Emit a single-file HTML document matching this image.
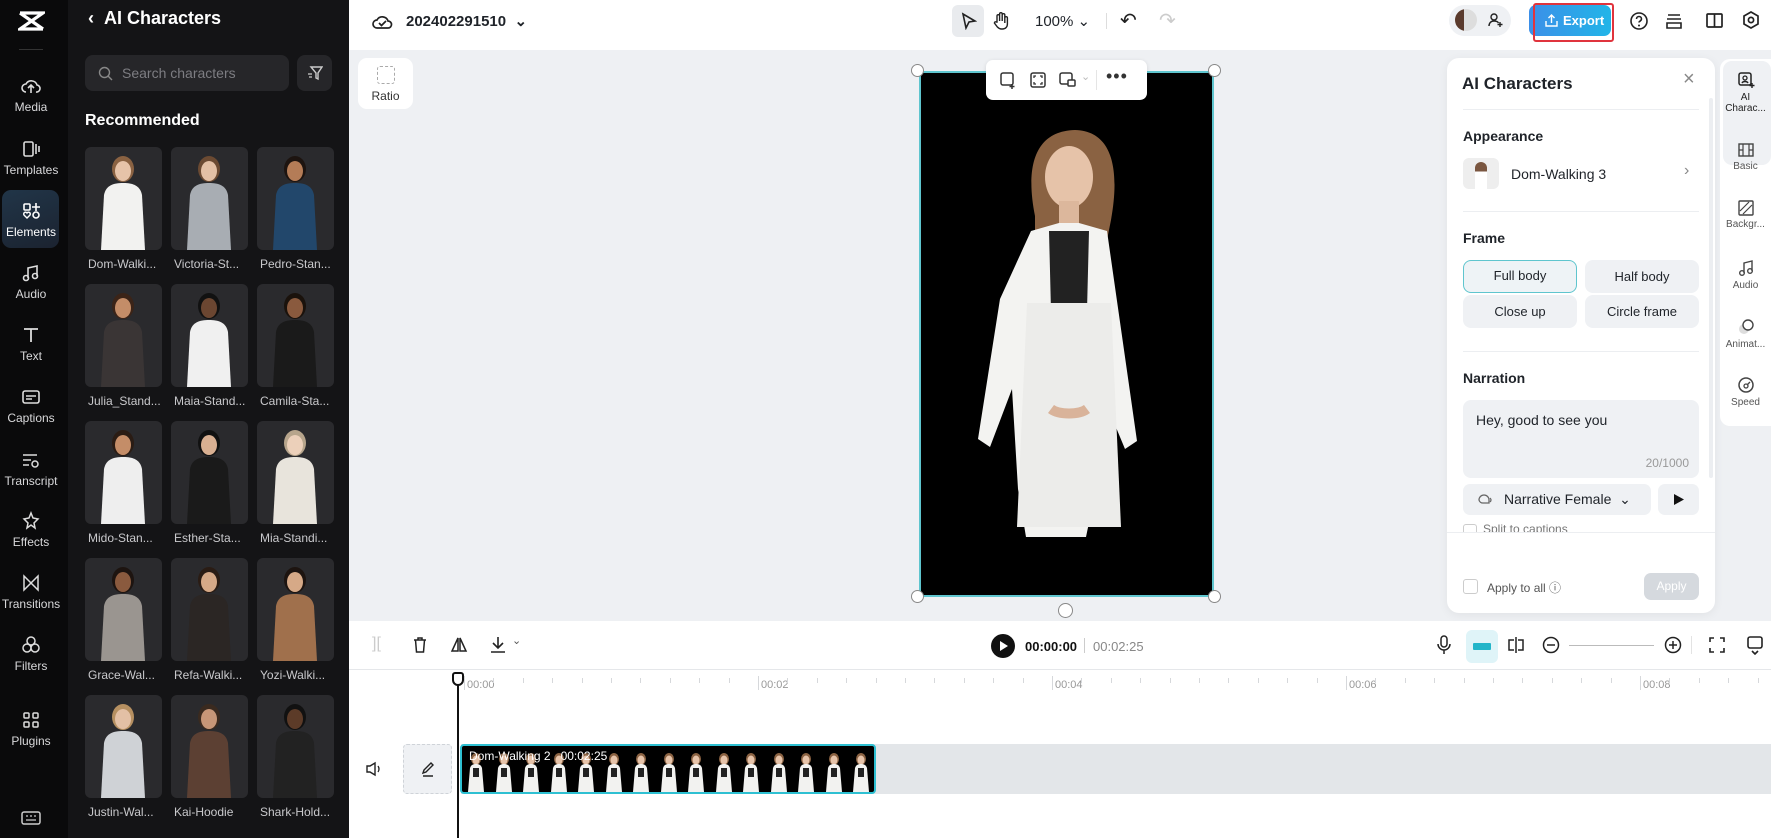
<!DOCTYPE html>
<html><head><meta charset="utf-8">
<style>
*{box-sizing:border-box;margin:0;padding:0}
body{width:1771px;height:838px;overflow:hidden;font-family:"Liberation Sans",sans-serif;background:#eef0f3;position:relative}
.abs{position:absolute}
#rail{left:0;top:0;width:68px;height:838px;background:#0a0a0b}
.ri{position:absolute;left:0;width:62px;text-align:center;color:#d8d8da;font-size:12px}
.ri svg{display:block;margin:0 auto 4px}
#panel{left:68px;top:0;width:281px;height:838px;background:#141416;color:#fff}
.card{position:absolute;width:77px;height:103px;border-radius:6px;background:#2a2a2d;overflow:hidden}
.cl{position:absolute;width:80px;font-size:12px;color:#c9c9cc;white-space:nowrap;overflow:hidden}
#top{left:349px;top:0;width:1422px;height:50px;background:#fff}
#tl{left:349px;top:621px;width:1422px;height:217px;background:#fff}
.btn{background:#eff1f4;border-radius:8px;text-align:center;font-size:13px;color:#1f2329;position:absolute;height:33px;line-height:33px;width:114px}
.rt{position:absolute;left:0;width:51px;text-align:center;font-size:10px;color:#555}
.rt svg{display:block;margin:0 auto 3px}
</style></head><body>

<div id="rail" class="abs">
 <svg class="abs" style="left:18px;top:10px" width="27" height="22" viewBox="0 0 27 22"><path d="M2 3h23L2 19h23M2 3l23 16" stroke="#fff" stroke-width="3.2" fill="none"/></svg>
 <div class="abs" style="left:19px;top:49px;width:24px;height:1px;background:#333"></div>
 <div class="abs" style="left:2px;top:190px;width:57px;height:58px;border-radius:9px;background:linear-gradient(160deg,#213548,#1b2330)"></div>
 <div class="ri" style="top:76px"><svg width="22" height="20" viewBox="0 0 22 20"><path d="M6 16a4 4 0 010-8 6 6 0 0111 1 3.5 3.5 0 01-1 7M11 17V10M8 12l3-3 3 3" stroke="#ddd" stroke-width="1.6" fill="none"/></svg>Media</div>
 <div class="ri" style="top:139px"><svg width="22" height="20" viewBox="0 0 22 20"><rect x="4" y="3" width="9" height="14" rx="1.5" stroke="#ddd" stroke-width="1.6" fill="none"/><path d="M16 5v10M19 7v6" stroke="#ddd" stroke-width="1.6"/></svg>Templates</div>
 <div class="ri" style="top:201px;color:#fff"><svg width="22" height="20" viewBox="0 0 22 20"><rect x="4" y="3" width="6" height="6" rx="1" stroke="#fff" stroke-width="1.6" fill="none"/><path d="M16 2v8M12 6h8" stroke="#fff" stroke-width="1.6"/><circle cx="16" cy="14" r="3" stroke="#fff" stroke-width="1.6" fill="none"/><path d="M7 17l-3-3a1.8 1.8 0 013-2 1.8 1.8 0 013 2z" stroke="#fff" stroke-width="1.4" fill="none"/></svg>Elements</div>
 <div class="ri" style="top:263px"><svg width="22" height="20" viewBox="0 0 22 20"><path d="M8 15V5l9-2v10" stroke="#ddd" stroke-width="1.6" fill="none"/><circle cx="6" cy="15" r="2.5" stroke="#ddd" stroke-width="1.6" fill="none"/><circle cx="15" cy="13" r="2.5" stroke="#ddd" stroke-width="1.6" fill="none"/></svg>Audio</div>
 <div class="ri" style="top:325px"><svg width="22" height="20" viewBox="0 0 22 20"><path d="M4 4h14M11 4v13" stroke="#ddd" stroke-width="1.8"/></svg>Text</div>
 <div class="ri" style="top:387px"><svg width="22" height="20" viewBox="0 0 22 20"><rect x="3" y="4" width="16" height="12" rx="2" stroke="#ddd" stroke-width="1.6" fill="none"/><path d="M6 9h10M6 12h6" stroke="#ddd" stroke-width="1.5"/></svg>Captions</div>
 <div class="ri" style="top:450px"><svg width="22" height="20" viewBox="0 0 22 20"><path d="M3 5h14M3 10h8M3 15h6" stroke="#ddd" stroke-width="1.6"/><circle cx="15" cy="14" r="3" stroke="#ddd" stroke-width="1.5" fill="none"/></svg>Transcript</div>
 <div class="ri" style="top:511px"><svg width="22" height="20" viewBox="0 0 22 20"><path d="M11 2l2 5 5 1-4 4 1 5-4-3-4 3 1-5-4-4 5-1z" stroke="#ddd" stroke-width="1.5" fill="none"/></svg>Effects</div>
 <div class="ri" style="top:573px"><svg width="22" height="20" viewBox="0 0 22 20"><path d="M4 3v14l7-7zM18 3v14l-7-7z" stroke="#ddd" stroke-width="1.5" fill="none"/></svg>Transitions</div>
 <div class="ri" style="top:635px"><svg width="22" height="20" viewBox="0 0 22 20"><circle cx="11" cy="6" r="4" stroke="#ddd" stroke-width="1.5" fill="none"/><circle cx="7" cy="13" r="4" stroke="#ddd" stroke-width="1.5" fill="none"/><circle cx="15" cy="13" r="4" stroke="#ddd" stroke-width="1.5" fill="none"/></svg>Filters</div>
 <div class="ri" style="top:710px"><svg width="22" height="20" viewBox="0 0 22 20"><rect x="4" y="3" width="5" height="5" rx="1" stroke="#ddd" stroke-width="1.5" fill="none"/><rect x="13" y="3" width="5" height="5" rx="1" stroke="#ddd" stroke-width="1.5" fill="none"/><rect x="4" y="12" width="5" height="5" rx="1" stroke="#ddd" stroke-width="1.5" fill="none"/><rect x="13" y="12" width="5" height="5" rx="1" stroke="#ddd" stroke-width="1.5" fill="none"/></svg>Plugins</div>
 <svg class="abs" style="left:21px;top:810px" width="20" height="16" viewBox="0 0 20 16"><rect x="1" y="2" width="18" height="12" rx="2" stroke="#ccc" stroke-width="1.5" fill="none"/><path d="M5 10h10M5 6h2M9 6h2M13 6h2" stroke="#ccc" stroke-width="1.3"/></svg>
</div>

<div id="panel" class="abs">
 <div class="abs" style="left:20px;top:8px;font-size:18px;font-weight:bold">‹&nbsp;&nbsp;AI Characters</div>
 <div class="abs" style="left:17px;top:55px;width:204px;height:36px;border-radius:8px;background:#262629;color:#7d7d82;font-size:14px;line-height:36px;padding-left:37px">Search characters
  <svg class="abs" style="left:13px;top:11px" width="15" height="15" viewBox="0 0 15 15"><circle cx="6.5" cy="6.5" r="5" stroke="#888" stroke-width="1.4" fill="none"/><path d="M10 10l4 4" stroke="#888" stroke-width="1.4"/></svg></div>
 <div class="abs" style="left:229px;top:55px;width:35px;height:36px;border-radius:8px;background:#262629"><svg style="margin:10px" width="16" height="16" viewBox="0 0 16 16"><path d="M4 2h11l-4 6v6l-2-1V8z" stroke="#ccc" stroke-width="1.4" fill="none"/><path d="M1 9h4M2 12h3" stroke="#ccc" stroke-width="1.2"/></svg></div>
 <div class="abs" style="left:17px;top:112px;font-size:16px;font-weight:bold">Recommended</div>
 <div id="grid"></div>
</div>

<div id="top" class="abs">
 <svg class="abs" style="left:22px;top:13px" width="22" height="18" viewBox="0 0 22 18"><path d="M6 15a4 4 0 010-8 6 6 0 0111 1 3.5 3.5 0 010 7z" stroke="#222" stroke-width="1.7" fill="none"/><path d="M8 10l2.5 2.5L15 8" stroke="#222" stroke-width="1.7" fill="none"/></svg>
 <div class="abs" style="left:57px;top:12px;font-size:15px;font-weight:bold;color:#1f2329">202402291510&nbsp;&nbsp;⌄</div>
 <div class="abs" style="left:603px;top:5px;width:32px;height:32px;border-radius:6px;background:#e9ebee"></div>
 <svg class="abs" style="left:611px;top:12px" width="17" height="18" viewBox="0 0 17 18"><path d="M3 2l12 7-6 1-3 6z" stroke="#222" stroke-width="1.6" fill="none"/></svg>
 <svg class="abs" style="left:642px;top:11px" width="20" height="20" viewBox="0 0 20 20"><path d="M6 11V5a1.3 1.3 0 012.6 0v5V3a1.3 1.3 0 012.6 0v7V4a1.3 1.3 0 012.6 0v8V7a1.3 1.3 0 012.6 0v6c0 3-2 5-5 5h-1c-2 0-3-1-4-2l-3-4a1.3 1.3 0 012-1z" stroke="#222" stroke-width="1.4" fill="none"/></svg>
 <div class="abs" style="left:686px;top:12px;font-size:15px;color:#1f2329">100% ⌄</div>
 <div class="abs" style="left:757px;top:13px;width:1px;height:16px;background:#ddd"></div>
 <div class="abs" style="left:771px;top:8px;font-size:20px;color:#222">↶</div>
 <div class="abs" style="left:810px;top:8px;font-size:20px;color:#ccc">↷</div>
 <div class="abs" style="left:1100px;top:5px;width:62px;height:31px;border-radius:16px;background:#eff1f4"></div>
 <div class="abs" style="left:1106px;top:9px;width:22px;height:22px;border-radius:50%;background:linear-gradient(90deg,#5a3a2c 40%,#ddd 40%)"></div>
 <svg class="abs" style="left:1139px;top:12px" width="16" height="16" viewBox="0 0 16 16"><circle cx="6" cy="5" r="3" stroke="#222" stroke-width="1.4" fill="none"/><path d="M1 14c0-3 2-5 5-5s4 1 4.5 2M12 10v5M9.5 12.5h5" stroke="#222" stroke-width="1.4" fill="none"/></svg>
 <div class="abs" style="left:1180px;top:5px;width:82px;height:31px;border-radius:7px;background:linear-gradient(90deg,#3c8fe8,#21b5e8);color:#fff;font-size:13px;font-weight:bold;line-height:31px;padding-left:34px">Export
  <svg class="abs" style="left:16px;top:9px" width="13" height="13" viewBox="0 0 13 13"><path d="M6.5 9V1M3.5 4l3-3 3 3M1 7v5h11V7" stroke="#fff" stroke-width="1.4" fill="none"/></svg></div>
 <div class="abs" style="left:1184px;top:3px;width:81px;height:39px;border:2px solid #e0343d;border-radius:3px"></div>
 <svg class="abs" style="left:1280px;top:11px" width="20" height="20" viewBox="0 0 20 20"><circle cx="10" cy="10" r="8" stroke="#222" stroke-width="1.6" fill="none"/><path d="M7.5 8a2.5 2.5 0 115 0c0 2-2.5 2-2.5 3.5" stroke="#222" stroke-width="1.6" fill="none"/><circle cx="10" cy="14.5" r="1" fill="#222"/></svg>
 <svg class="abs" style="left:1316px;top:12px" width="18" height="18" viewBox="0 0 18 18"><path d="M3 3h12M2 7h14M2 11h14v5H2z" stroke="#222" stroke-width="1.6" fill="none"/></svg>
 <svg class="abs" style="left:1356px;top:11px" width="19" height="19" viewBox="0 0 19 19"><rect x="2" y="3" width="15" height="13" rx="1" stroke="#222" stroke-width="1.7" fill="none"/><path d="M9.5 3v13" stroke="#222" stroke-width="1.7"/></svg>
 <svg class="abs" style="left:1392px;top:10px" width="20" height="20" viewBox="0 0 20 20"><path d="M10 2l7 4v8l-7 4-7-4V6z" stroke="#222" stroke-width="1.7" fill="none"/><circle cx="10" cy="10" r="2.6" stroke="#222" stroke-width="1.7" fill="none"/></svg>
</div>

<!-- ratio -->
<div class="abs" style="left:358px;top:58px;width:55px;height:51px;background:#fff;border-radius:9px;text-align:center;font-size:12px;color:#333;padding-top:8px">
 <div style="width:18px;height:18px;border:1.5px dashed #aaa;border-radius:3px;margin:0 auto 5px"></div>Ratio</div>

<!-- canvas -->
<div class="abs" style="left:919px;top:71px;width:295px;height:526px;background:#000;border:2px solid #5fc5ce"></div>
<svg class="abs" style="left:919px;top:71px" width="295" height="526" viewBox="0 0 295 526">
 <path d="M116 145c-10-50 0-85 40-86 38 1 45 40 36 90l-8 40-68-4z" fill="#8a6242"/>
 <ellipse cx="150" cy="106" rx="24" ry="31" fill="#e6c3a9"/>
 <rect x="140" y="130" width="20" height="22" fill="#dcb79c"/>
 <path d="M112 160l28-8h20l28 8 10 70 20 140-12 8-25-60-4 100-10 48h-60l-8-48-6-100-22 58-12-8 22-140z" fill="#f3f3f1"/>
 <path d="M130 160h40l-2 80h-36z" fill="#222"/>
 <path d="M108 232h84l10 224H98z" fill="#ececea"/>
 <path d="M132 338c8 6 28 6 36 0" stroke="#d9b39a" stroke-width="10" fill="none"/>
</svg>
<div class="abs" style="left:911px;top:64px;width:13px;height:13px;border-radius:50%;background:#fff;border:1px solid #888"></div>
<div class="abs" style="left:1208px;top:64px;width:13px;height:13px;border-radius:50%;background:#fff;border:1px solid #888"></div>
<div class="abs" style="left:911px;top:590px;width:13px;height:13px;border-radius:50%;background:#fff;border:1px solid #888"></div>
<div class="abs" style="left:1208px;top:590px;width:13px;height:13px;border-radius:50%;background:#fff;border:1px solid #888"></div>
<div class="abs" style="left:1058px;top:603px;width:15px;height:15px;border-radius:50%;background:#fff;border:1px solid #888"></div>
<div class="abs" style="left:986px;top:60px;width:161px;height:40px;background:#fff;border-radius:7px;box-shadow:0 1px 4px rgba(0,0,0,.12)">
 <svg class="abs" style="left:13px;top:11px" width="18" height="18" viewBox="0 0 18 18"><rect x="2" y="2" width="12" height="12" rx="2" stroke="#333" stroke-width="1.5" fill="none"/><path d="M13 13v5M10.5 15.5h5" stroke="#333" stroke-width="1.5"/></svg>
 <svg class="abs" style="left:43px;top:11px" width="18" height="18" viewBox="0 0 18 18"><rect x="2" y="2" width="14" height="14" rx="2" stroke="#333" stroke-width="1.5" fill="none"/><path d="M5 7V5h2M11 5h2v2M13 11v2h-2M7 13H5v-2" stroke="#333" stroke-width="1.3" fill="none"/></svg>
 <svg class="abs" style="left:73px;top:11px" width="18" height="18" viewBox="0 0 18 18"><rect x="1" y="2" width="12" height="11" rx="2" stroke="#333" stroke-width="1.5" fill="none"/><rect x="9" y="9" width="7" height="6" rx="1" stroke="#333" stroke-width="1.5" fill="#fff"/></svg>
 <div class="abs" style="left:95px;top:10px;color:#bbb;font-size:11px">⌄</div>
 <div class="abs" style="left:110px;top:10px;width:1px;height:20px;background:#e5e5e5"></div>
 <div class="abs" style="left:120px;top:6px;font-size:18px;color:#333;letter-spacing:1px">•••</div>
</div>

<!-- right panel -->
<div class="abs" style="left:1447px;top:58px;width:268px;height:555px;background:#fff;border-radius:12px;box-shadow:0 2px 10px rgba(0,0,0,.06);color:#1f2329">
 <div class="abs" style="left:15px;top:16px;font-size:17px;font-weight:bold">AI Characters</div>
 <div class="abs" style="left:236px;top:10px;font-size:20px;color:#888">×</div>
 <div class="abs" style="left:16px;top:51px;width:236px;height:1px;background:#eceef1"></div>
 <div class="abs" style="left:16px;top:70px;font-size:14px;font-weight:bold">Appearance</div>
 <div class="abs" style="left:16px;top:100px;width:36px;height:31px;border-radius:6px;background:#eee;overflow:hidden"><div style="margin:4px auto 0;width:12px;height:27px;background:linear-gradient(#7a5640 35%,#fff 35%);border-radius:6px 6px 0 0"></div></div>
 <div class="abs" style="left:64px;top:108px;font-size:14px">Dom-Walking 3</div>
 <div class="abs" style="left:237px;top:104px;font-size:16px;color:#888">›</div>
 <div class="abs" style="left:16px;top:153px;width:236px;height:1px;background:#eceef1"></div>
 <div class="abs" style="left:16px;top:172px;font-size:14px;font-weight:bold">Frame</div>
 <div class="btn" style="left:16px;top:202px;background:#eef3f6;border:1.5px solid #5fc5ce;line-height:30px">Full body</div>
 <div class="btn" style="left:138px;top:202px">Half body</div>
 <div class="btn" style="left:16px;top:237px">Close up</div>
 <div class="btn" style="left:138px;top:237px">Circle frame</div>
 <div class="abs" style="left:16px;top:293px;width:236px;height:1px;background:#eceef1"></div>
 <div class="abs" style="left:16px;top:312px;font-size:14px;font-weight:bold">Narration</div>
 <div class="abs" style="left:16px;top:342px;width:236px;height:78px;border-radius:8px;background:#eff1f4;font-size:14px;padding:12px 13px">Hey, good to see you
  <div class="abs" style="right:10px;bottom:8px;font-size:12px;color:#999">20/1000</div></div>
 <div class="abs" style="left:16px;top:426px;width:188px;height:31px;border-radius:7px;background:#eff1f4;font-size:14px;line-height:31px;padding-left:41px">Narrative Female&nbsp;&nbsp;⌄
  <svg class="abs" style="left:14px;top:9px" width="17" height="14" viewBox="0 0 17 14"><path d="M2 7a5 5 0 0110 0v3H6a4 4 0 01-4-3z" stroke="#666" stroke-width="1.3" fill="none"/><path d="M13 5q2 2 0 4" stroke="#666" stroke-width="1.2" fill="none"/></svg></div>
 <div class="abs" style="left:211px;top:426px;width:41px;height:31px;border-radius:7px;background:#eff1f4"><svg style="margin:9px 0 0 15px" width="12" height="13" viewBox="0 0 12 13"><path d="M1 1l10 5.5L1 12z" fill="#111"/></svg></div>
 <div class="abs" style="left:16px;top:466px;width:14px;height:8px;border:1px solid #ccc;border-bottom:none;border-radius:3px 3px 0 0"></div>
 <div class="abs" style="left:36px;top:464px;height:10px;overflow:hidden;font-size:12px;color:#777">Split to captions</div>
 <div class="abs" style="left:0;top:474px;width:268px;height:1px;background:#eceef1"></div>
 <div class="abs" style="left:16px;top:521px;width:15px;height:15px;border:1px solid #ccc;border-radius:3px;top:521px;top:521px;top:521px"></div>
 <div class="abs" style="left:16px;top:521px;"></div>
 <div class="abs" style="left:40px;top:521px;font-size:12px;color:#555">Apply to all ⓘ</div>
 <div class="abs" style="left:197px;top:515px;width:55px;height:27px;border-radius:7px;background:#d5d9de;color:#fff;font-size:12px;text-align:center;line-height:27px">Apply</div>
 <div class="abs" style="left:262px;top:40px;width:4px;height:380px;border-radius:2px;background:#eceef1"></div>
</div>
<style>#fixcb{}</style>

<!-- right tabs -->
<div class="abs" style="left:1720px;top:59px;width:51px;height:367px;background:#fff;border-radius:10px 0 0 10px">
 <div class="abs" style="left:3px;top:2px;width:48px;height:104px;border-radius:9px;background:#eff1f4"></div>
 <div class="rt" style="top:12px;color:#222"><svg width="18" height="18" viewBox="0 0 18 18"><rect x="2" y="2" width="12" height="12" rx="2" stroke="#222" stroke-width="1.5" fill="none"/><circle cx="8" cy="7" r="2" stroke="#222" stroke-width="1.3" fill="none"/><path d="M5 12c1-2 5-2 6 0M15 12v5M12.5 14.5h5" stroke="#222" stroke-width="1.4" fill="none"/></svg>AI<br>Charac...</div>
 <div class="rt" style="top:83px"><svg width="18" height="16" viewBox="0 0 18 16"><rect x="2" y="2" width="14" height="12" stroke="#444" stroke-width="1.4" fill="none"/><path d="M6 2v12M12 2v12M2 8h4M12 8h4" stroke="#444" stroke-width="1.2"/></svg>Basic</div>
 <div class="rt" style="top:141px"><svg width="18" height="16" viewBox="0 0 18 16"><rect x="2" y="1" width="14" height="14" rx="1" stroke="#444" stroke-width="1.4" fill="none"/><path d="M3 11l9-9M6 14l9-9" stroke="#444" stroke-width="1.2"/></svg>Backgr...</div>
 <div class="rt" style="top:200px"><svg width="18" height="18" viewBox="0 0 18 18"><path d="M7 14V4l8-2v10" stroke="#444" stroke-width="1.4" fill="none"/><circle cx="5" cy="14" r="2.3" stroke="#444" stroke-width="1.4" fill="none"/><circle cx="13" cy="12" r="2.3" stroke="#444" stroke-width="1.4" fill="none"/></svg>Audio</div>
 <div class="rt" style="top:259px"><svg width="18" height="18" viewBox="0 0 18 18"><circle cx="7" cy="11" r="5" fill="#ddd"/><circle cx="11" cy="7" r="5" stroke="#444" stroke-width="1.4" fill="#fff"/></svg>Animat...</div>
 <div class="rt" style="top:317px"><svg width="18" height="18" viewBox="0 0 18 18"><circle cx="9" cy="9" r="7" stroke="#444" stroke-width="1.5" fill="none"/><circle cx="9" cy="10" r="2" stroke="#444" stroke-width="1.3" fill="none"/><path d="M10 9l3-3" stroke="#444" stroke-width="1.3"/></svg>Speed</div>
</div>

<!-- timeline -->
<div id="tl" class="abs">
 <div class="abs" style="left:0;top:48px;width:1422px;height:1px;background:#e5e7ea"></div>
 <div class="abs" style="left:23px;top:14px;font-size:16px;color:#ccc">][</div>
 <svg class="abs" style="left:63px;top:15px" width="16" height="18" viewBox="0 0 16 18"><path d="M2 4h12M6 4V2h4v2M3.5 4l1 12h7l1-12" stroke="#222" stroke-width="1.5" fill="none"/></svg>
 <svg class="abs" style="left:101px;top:15px" width="18" height="18" viewBox="0 0 18 18"><path d="M8 2L2 15h6zM10 2l6 13h-6z" stroke="#222" stroke-width="1.5" fill="none"/></svg>
 <svg class="abs" style="left:140px;top:14px" width="20" height="20" viewBox="0 0 20 20"><path d="M9 2v11M4 8l5 5 5-5M2 17h14" stroke="#222" stroke-width="1.6" fill="none"/></svg>
 <div class="abs" style="left:163px;top:13px;font-size:11px;color:#555">⌄</div>
 <div class="abs" style="left:642px;top:13px;width:24px;height:24px;border-radius:50%;background:#111"><svg style="margin:7px 0 0 9px" width="8" height="10" viewBox="0 0 8 10"><path d="M0 0l8 5-8 5z" fill="#fff"/></svg></div>
 <div class="abs" style="left:676px;top:18px;font-size:13px;font-weight:bold;color:#111">00:00:00</div>
 <div class="abs" style="left:735px;top:17px;width:1px;height:15px;background:#ccc"></div>
 <div class="abs" style="left:744px;top:18px;font-size:13px;color:#888">00:02:25</div>
 <svg class="abs" style="left:1088px;top:14px" width="14" height="20" viewBox="0 0 14 20"><rect x="4" y="1" width="6" height="11" rx="3" stroke="#222" stroke-width="1.5" fill="none"/><path d="M1 9a6 6 0 0012 0M7 15v4" stroke="#222" stroke-width="1.5" fill="none"/></svg>
 <div class="abs" style="left:1117px;top:9px;width:32px;height:33px;border-radius:6px;background:#dff4f8"></div>
 <div class="abs" style="left:1124px;top:22px;width:18px;height:7px;background:#23b5c9;border-radius:1px"></div>
 <svg class="abs" style="left:1158px;top:15px" width="18" height="18" viewBox="0 0 18 18"><path d="M9 1v16M7 4H2v10h5M11 4h5v10h-5" stroke="#222" stroke-width="1.5" fill="none"/></svg>
 <svg class="abs" style="left:1193px;top:15px" width="18" height="18" viewBox="0 0 18 18"><circle cx="9" cy="9" r="7.5" stroke="#222" stroke-width="1.5" fill="none"/><path d="M5 9h8" stroke="#222" stroke-width="1.5"/></svg>
 <div class="abs" style="left:1220px;top:24px;width:85px;height:1px;background:#bbb"></div>
 <svg class="abs" style="left:1315px;top:15px" width="18" height="18" viewBox="0 0 18 18"><circle cx="9" cy="9" r="7.5" stroke="#222" stroke-width="1.5" fill="none"/><path d="M5 9h8M9 5v8" stroke="#222" stroke-width="1.5"/></svg>
 <div class="abs" style="left:1342px;top:15px;width:1px;height:18px;background:#e3e3e3"></div>
 <svg class="abs" style="left:1359px;top:15px" width="18" height="18" viewBox="0 0 18 18"><path d="M2 6V2h4M12 2h4v4M16 12v4h-4M6 16H2v-4" stroke="#222" stroke-width="1.6" fill="none"/></svg>
 <svg class="abs" style="left:1397px;top:14px" width="18" height="20" viewBox="0 0 18 20"><rect x="2" y="2" width="14" height="11" rx="2" stroke="#222" stroke-width="1.6" fill="none"/><path d="M6 16l3 3 3-3" stroke="#222" stroke-width="1.6" fill="none"/></svg>
 <div id="ruler"></div>
 <div class="abs" style="left:55px;top:40px;"></div>
 <svg class="abs" style="left:16px;top:140px" width="18" height="16" viewBox="0 0 18 16"><path d="M2 5h3l5-3v12l-5-3H2z" stroke="#222" stroke-width="1.4" fill="none"/><path d="M13 5q2 3 0 6" stroke="#222" stroke-width="1.3" fill="none"/></svg>
 <div class="abs" style="left:54px;top:123px;width:49px;height:50px;border:1px dashed #cfd3d8;border-radius:4px;background:#eff1f4"><svg style="margin:16px 0 0 16px" width="16" height="16" viewBox="0 0 16 16"><path d="M3 12l1-3 7-7 2 2-7 7zM3 15h10" stroke="#222" stroke-width="1.4" fill="none"/></svg></div>
 <div class="abs" style="left:112px;top:123px;width:1310px;height:50px;background:#e3e6e9"></div>
 <div class="abs" style="left:111px;top:123px;width:416px;height:50px;border:2.5px solid #2ec0d2;border-radius:4px;background:#000;overflow:hidden">
  <div id="thumbs" class="abs" style="left:2px;top:6px"></div>
  <div class="abs" style="left:7px;top:3px;color:#fff;font-size:12px;white-space:nowrap">Dom-Walking 2&nbsp;&nbsp;&nbsp;00:02:25</div>
 </div>
 <div class="abs" style="left:108px;top:51px;width:2px;height:166px;background:#111"></div>
 <div class="abs" style="left:103px;top:51px;width:12px;height:14px;border:2px solid #111;border-radius:3px 3px 6px 6px;background:#fff"></div>
</div>

<script>
var g=document.getElementById('grid'),n=['Dom-Walki...','Victoria-St...','Pedro-Stan...','Julia_Stand...','Maia-Stand...','Camila-Sta...','Mido-Stan...','Esther-Sta...','Mia-Standi...','Grace-Wal...','Refa-Walki...','Yozi-Walki...','Justin-Wal...','Kai-Hoodie','Shark-Hold...'];
var hair=['#8a6242','#6b4a32','#1d1410','#3b2418','#111','#1a120c','#2a1c14','#111','#b7a58c','#1d1410','#2a1c14','#1d1410','#b69061','#3a2a1f','#111'];
var skin=['#e6c3a9','#e3c0a5','#b47c57','#c48d68','#6b4631','#8a5a3e','#c48d68','#d9b092','#ecd0ba','#8a5a3e','#d6a987','#d6a987','#e3c0a5','#c79677','#5c3b28'];
var body=['#f2f2f0','#a8adb3','#22476b','#3a3535','#f0f0f0','#1a1a1a','#eeeeee','#1a1a1a','#e8e4dc','#9a9590','#2b2624','#a0704c','#cfd2d6','#5c4033','#222'];
var h='';
for(var i=0;i<15;i++){var r=Math.floor(i/3),c=i%3,x=17+c*86,y=147+r*137;
h+='<div class="card" style="left:'+x+'px;top:'+y+'px"><svg width="77" height="103" viewBox="0 0 77 103"><ellipse cx="38" cy="22" rx="11" ry="13" fill="'+hair[i]+'"/><ellipse cx="38" cy="24" rx="8" ry="10" fill="'+skin[i]+'"/><path d="M16 103l3-55c2-10 10-12 19-12s17 2 19 12l3 55z" fill="'+body[i]+'"/></svg></div><div class="cl" style="left:'+(x+3)+'px;top:'+(y+110)+'px">'+n[i]+'</div>';}
g.innerHTML=h;
var t='';for(var k=0;k<15;k++){t+='<svg class="abs" style="left:'+(k*27.5)+'px;top:0" width="24" height="40" viewBox="0 0 24 40"><ellipse cx="12" cy="7" rx="5" ry="6" fill="#8a6242"/><ellipse cx="12" cy="8" rx="3.5" ry="4.5" fill="#e6c3a9"/><path d="M4 40l2-24c1-3 3-4 6-4s5 1 6 4l2 24z" fill="#f2f2f0"/><rect x="9" y="16" width="6" height="9" fill="#222"/></svg>';}
document.getElementById('thumbs').innerHTML=t;
var ru='';for(var s=0;s<48;s++){var xx=115+s*29.4;var big=s%10==0;ru+='<div class="abs" style="left:'+xx+'px;top:'+(big?55:57)+'px;width:1px;height:'+(big?14:5)+'px;background:#d6d8db"></div>';if(big)ru+='<div class="abs" style="left:'+(xx+3)+'px;top:58px;font-size:11px;color:#999">00:0'+(s/5)+'</div>';}
document.getElementById('ruler').innerHTML=ru;
</script>
</body></html>
